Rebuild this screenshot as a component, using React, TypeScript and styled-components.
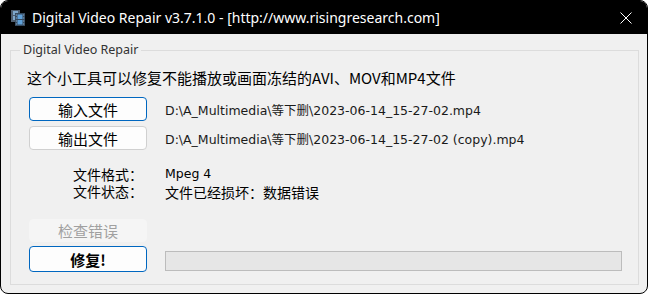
import React from 'react';
import styled, { createGlobalStyle } from 'styled-components';

const GlobalStyle = createGlobalStyle`
  html, body {
    margin: 0;
    padding: 0;
    background: #ffffff;
  }
  body {
    font-family: 'Noto Sans', 'Noto Sans CJK SC', sans-serif;
  }
`;

const cjk = `'Noto Sans CJK SC', 'Noto Sans', sans-serif`;
const tahoma = `'DejaVu Sans', 'Noto Sans CJK SC', sans-serif`;

const Window = styled.div`
  width: 648px;
  height: 294px;
  box-sizing: border-box;
  border: 1px solid #000000;
  border-radius: 8px;
  overflow: hidden;
  display: flex;
  flex-direction: column;
  background: #f0f0f0;
`;

const TitleBar = styled.div`
  height: 33px;
  flex: none;
  display: flex;
  align-items: center;
  gap: 6px;
  padding-left: 9px;
  background: #000000;
  color: #ffffff;
`;

const TitleText = styled.span`
  font-family: 'Noto Sans', sans-serif;
  font-size: 14px;
  line-height: 20px;
  white-space: nowrap;
`;

const CloseButton = styled.div`
  margin-left: auto;
  width: 42px;
  height: 33px;
  display: flex;
  align-items: center;
  justify-content: center;
`;

const Body = styled.div`
  flex: 1;
  display: flex;
  flex-direction: column;
  padding: 8px 8px 8px 9px;
`;

const GroupBox = styled.fieldset`
  flex: 1;
  margin: 0;
  padding: 0;
  min-width: 0;
  border: 1px solid #dcdcdc;
  display: flex;
  flex-direction: column;
`;

const Legend = styled.legend`
  margin-left: 9px;
  padding: 0 3px;
  font-family: 'Noto Sans', sans-serif;
  font-size: 12.5px;
  line-height: 16px;
  color: #333333;
`;

const Content = styled.div`
  flex: 1;
  display: flex;
  flex-direction: column;
  padding: 10px 16px 0 16px;
`;

const Description = styled.div`
  font-family: ${cjk};
  font-size: 15px;
  line-height: 20px;
  color: #000000;
  white-space: nowrap;
`;

const FormGrid = styled.div<{ $top: number; $rowGap: number }>`
  display: grid;
  grid-template-columns: 118px 1fr;
  column-gap: 18px;
  row-gap: ${(p) => p.$rowGap}px;
  margin-top: ${(p) => p.$top}px;
  margin-left: 2px;
  align-items: center;
`;

const Button = styled.button<{ $focused?: boolean; $height?: number; $bold?: boolean }>`
  height: ${(p) => p.$height || 24}px;
  box-sizing: border-box;
  padding: 0;
  border: 1px solid ${(p) => (p.$focused ? '#0067c0' : '#d0d0d0')};
  border-radius: 4px;
  background: #fdfdfd;
  font-family: ${cjk};
  font-size: 15px;
  font-weight: ${(p) => (p.$bold ? 700 : 400)};
  color: #000000;

  &:disabled {
    background: #f5f5f5;
    border-color: #f5f5f5;
    color: #a0a0a0;
  }
`;

const PathText = styled.span`
  font-family: ${tahoma};
  font-size: 12.5px;
  color: #1a1a1a;
  white-space: nowrap;
`;

const InfoBlock = styled.div`
  display: flex;
  margin-top: 16px;
  margin-left: 2px;
`;

const InfoLabels = styled.div`
  width: 136px;
  box-sizing: border-box;
  padding-left: 44px;
  font-family: ${cjk};
  font-size: 14px;
  line-height: 17px;
  white-space: pre-line;
  color: #000000;
`;

const InfoValues = styled.div`
  display: grid;
  grid-auto-rows: 17px;
  align-items: center;
`;

const InfoValue = styled.span<{ $latin?: boolean }>`
  font-family: ${(p) => (p.$latin ? tahoma : cjk)};
  font-size: ${(p) => (p.$latin ? 12.5 : 14)}px;
  line-height: 1;
  color: #000000;
  white-space: nowrap;
`;

const ProgressBar = styled.div`
  height: 20px;
  box-sizing: border-box;
  align-self: end;
  margin-bottom: 1px;
  border: 1px solid #bcbcbc;
  background: #e6e6e6;
`;

const AppIcon = () => (
  <svg width="16" height="16" viewBox="0 0 16 16">
    <rect x="1" y="0" width="9" height="12" fill="#4d5d6e" />
    <rect x="3" y="1" width="5" height="4" fill="#7ea6c9" />
    <rect x="3" y="6" width="5" height="4" fill="#7ea6c9" />
    <rect x="5" y="3" width="10" height="13" fill="#34495e" />
    <rect x="7.5" y="4.5" width="5" height="4.5" fill="#5fa0d8" />
    <rect x="7.5" y="10" width="5" height="4.5" fill="#5fa0d8" />
    <rect x="5.8" y="4.5" width="1" height="1" fill="#a9c4dc" />
    <rect x="5.8" y="7.5" width="1" height="1" fill="#a9c4dc" />
    <rect x="5.8" y="10.5" width="1" height="1" fill="#a9c4dc" />
    <rect x="5.8" y="13.5" width="1" height="1" fill="#a9c4dc" />
    <rect x="13.2" y="4.5" width="1" height="1" fill="#a9c4dc" />
    <rect x="13.2" y="7.5" width="1" height="1" fill="#a9c4dc" />
    <rect x="13.2" y="10.5" width="1" height="1" fill="#a9c4dc" />
    <rect x="13.2" y="13.5" width="1" height="1" fill="#a9c4dc" />
  </svg>
);

const CloseIcon = () => (
  <svg width="12" height="12" viewBox="0 0 12 12">
    <path d="M0.5 0.5 L11.5 11.5 M11.5 0.5 L0.5 11.5" stroke="#ffffff" strokeWidth="1" fill="none" />
  </svg>
);

export default function App() {
  return (
    <>
      <GlobalStyle />
      <Window>
        <TitleBar>
          <AppIcon />
          <TitleText>Digital Video Repair v3.7.1.0 - [http://www.risingresearch.com]</TitleText>
          <CloseButton>
            <CloseIcon />
          </CloseButton>
        </TitleBar>
        <Body>
          <GroupBox>
            <Legend>Digital Video Repair</Legend>
            <Content>
              <Description>这个小工具可以修复不能播放或画面冻结的AVI、MOV和MP4文件</Description>
              <FormGrid $top={9} $rowGap={5}>
                <Button $focused>输入文件</Button>
                <PathText>D:\A_Multimedia\等下删\2023-06-14_15-27-02.mp4</PathText>
                <Button>输出文件</Button>
                <PathText>D:\A_Multimedia\等下删\2023-06-14_15-27-02 (copy).mp4</PathText>
              </FormGrid>
              <InfoBlock>
                <InfoLabels>{'文件格式：\n文件状态：'}</InfoLabels>
                <InfoValues>
                  <InfoValue $latin>Mpeg 4</InfoValue>
                  <InfoValue>文件已经损坏：数据错误</InfoValue>
                </InfoValues>
              </InfoBlock>
              <FormGrid $top={19} $rowGap={4}>
                <Button disabled $height={23}>检查错误</Button>
                <span />
                <Button $focused $bold $height={26}>修复!</Button>
                <ProgressBar />
              </FormGrid>
            </Content>
          </GroupBox>
        </Body>
      </Window>
    </>
  );
}
